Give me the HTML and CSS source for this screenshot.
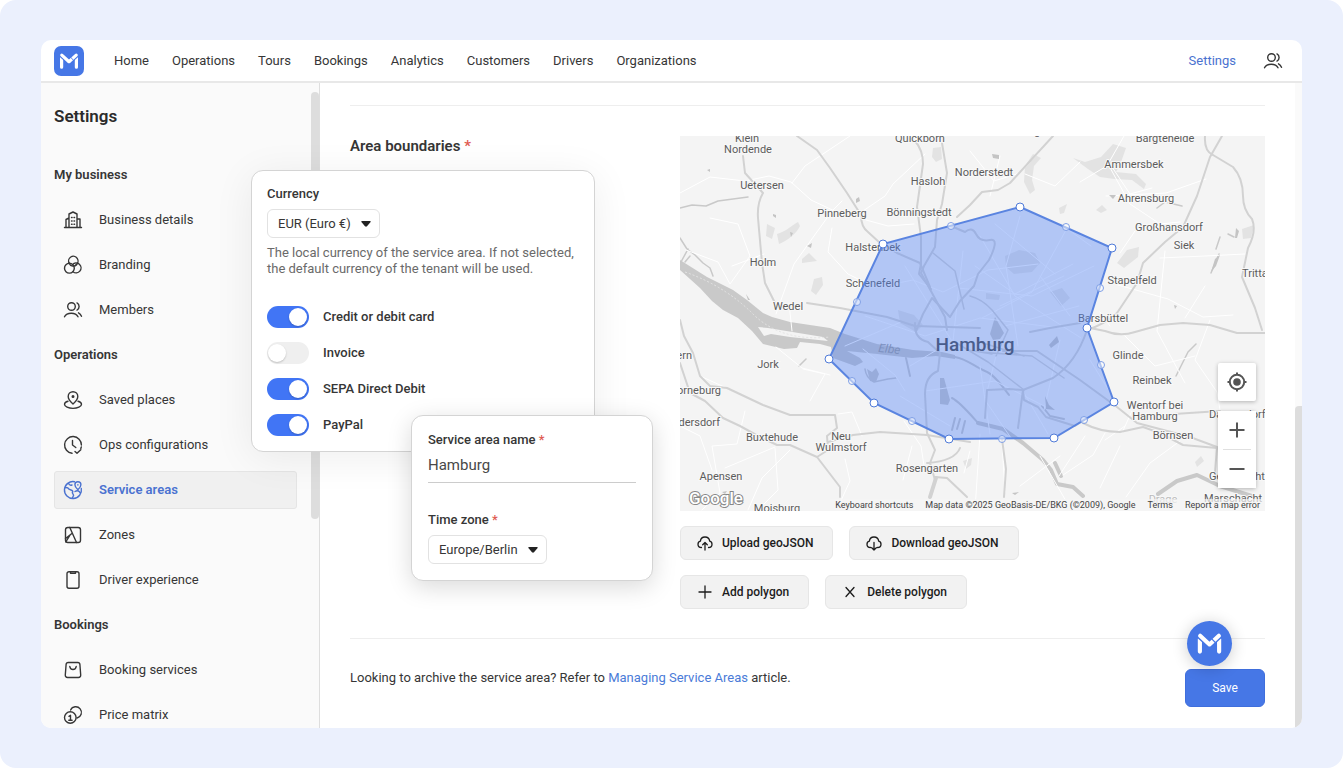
FILE: index.html
```html
<!DOCTYPE html>
<html lang="en">
<head>
<meta charset="utf-8">
<meta name="viewport" content="width=device-width, initial-scale=1">
<title>Settings – Service areas</title>
<link rel="stylesheet" href="styles.css">
</head>
<body>
<svg class="sprite" aria-hidden="true">
  <symbol id="logo" viewBox="0 0 30 30">
    <g fill="none" stroke="#fff" stroke-width="3.2" stroke-linecap="round" stroke-linejoin="round">
      <path d="M7.600 11.500V21.200M22.400 11.500V21.200"/>
      <path stroke="#4677e6" stroke-width="5" d="M7.800 9.300L15 15.900L22.200 9.300"/>
      <path d="M7.800 9.100L15 15.700L22.200 9.100"/>
      <path stroke="#4677e6" stroke-width=".9" stroke-linecap="butt" d="M16.400 11L20 14.800"/>
    </g>
  </symbol>
  <symbol id="people" viewBox="0 0 20 20">
    <circle cx="8.500" cy="6.500" r="3.800"/><path d="M14 2.900c2.800 1.300 2.800 5.900 0 7.200M1.500 16.800c2.300-4.800 11.200-4.800 13.500 0M15.500 12.800c1.400.7 2.300 1.800 3 3.500"/>
  </symbol>
</svg>
<div class="page">
<div class="app">
  <header class="topbar">
    <a class="logo" href="#" aria-label="Start"><svg viewBox="0 0 30 30"><use href="#logo"/></svg></a>
    <nav class="topnav">
      <a href="#">Home</a><a href="#">Operations</a><a href="#">Tours</a><a href="#">Bookings</a><a href="#">Analytics</a><a href="#">Customers</a><a href="#">Drivers</a><a href="#">Organizations</a>
    </nav>
    <a class="topbar-settings" href="#">Settings</a>
    <button class="account" type="button" aria-label="Account"><svg class="icon"><use href="#people"/></svg></button>
  </header>

  <div class="body">
    <aside class="sidebar">
      <h1>Settings</h1>
      <nav class="menu">
        <h2>My business</h2>
        <a href="#"><svg class="icon" viewBox="0 0 20 20"><path d="M1.500 17.500h17M3 17.500V9.500l3-1.500v9.500M6 17.500V4l4-2 4 2v13.500M14 9h3v8.500M8.500 7.500h.6M11 7.500h.6M8.500 11h.6M11 11h.6M8.500 14.300h.6M11 14.300h.6"/></svg>Business details</a>
        <a href="#"><svg class="icon" viewBox="0 0 20 20"><path d="M6.300 8.400A4.700 4.700 0 1 1 13 9.800"/><circle cx="6.400" cy="13.200" r="4.900"/><path d="M6.100 8.200C7.500 11.500 11.500 12.200 13.800 9.500M9.500 9.600A4.900 4.900 0 1 1 10 16.700"/></svg>Branding</a>
        <a href="#"><svg class="icon"><use href="#people"/></svg>Members</a>
        <h2>Operations</h2>
        <a href="#"><svg class="icon" viewBox="0 0 20 20"><path d="M10 14c-3.500-3-4.800-5-4.800-7.500a4.800 4.800 0 0 1 9.600 0C14.800 9 13.500 11 10 14z"/><circle cx="10" cy="6.600" r=".8" fill="currentColor"/><path d="M5 11.200c-2 .5-3.500 1.500-3.500 3 0 2.400 4 4.200 8.500 4.200s8.500-1.800 8.500-4.200c0-1.500-1.500-2.500-3.500-3"/></svg>Saved places</a>
        <a href="#"><svg class="icon" viewBox="0 0 20 20"><path d="M9 18.300A8.400 8.400 0 1 1 18.400 10M18.300 12l-.5 1.500M9.500 5.500V10l3.300 2.500M12 16.500l2 1.800 3.800-3.600"/></svg>Ops configurations</a>
        <a class="active" href="#"><svg class="icon" viewBox="0 0 20 20"><path d="M11.500 1.700A8.500 8.500 0 1 0 18.300 8.500M2 7.500c2.500-.3 3.300.2 4 1.700l3 1.300c1 .5 1 1.300.3 2.200l1.300 2.500-1.300 3M5.500 3.500c1 2 2 2 3.500 1.500M12 11.500c1.500-1 3.500-.8 4.500.3l1 1.700"/><path d="M14.900 9.700c-2-1.700-3-3-3-4.900a3 3 0 0 1 6 0c0 1.900-1 3.200-3 4.900zM14.900 4.800v.3"/></svg>Service areas</a>
        <a href="#"><svg class="icon" viewBox="0 0 20 20"><rect x="2.500" y="2.500" width="15" height="15" rx="2.300"/><path d="M6.800 2.500l6.700 15M2.500 13.500l6.700-5.300M2.800 16.800l4-6.500"/></svg>Zones</a>
        <a href="#"><svg class="icon" viewBox="0 0 20 20"><rect x="4" y="1.700" width="12" height="16.600" rx="2"/><path d="M7.500 1.700v1.600h5V1.700"/></svg>Driver experience</a>
        <h2>Bookings</h2>
        <a href="#"><svg class="icon" viewBox="0 0 20 20"><path d="M5.200 2.500h9.600c1.300 0 2 .8 2.100 2l.8 10.500c.1 1.500-.8 2.500-2.200 2.500h-11c-1.400 0-2.300-1-2.200-2.500L3.100 4.500c.1-1.200.8-2 2.100-2zM6.800 6.500c.5 4 5.900 4 6.400 0"/></svg>Booking services</a>
        <a href="#"><svg class="icon" viewBox="0 0 20 20"><circle cx="7.300" cy="12.500" r="5.800"/><path d="M7.600 5a5.700 5.700 0 1 1 6.500 8M6 11.300l1.500-1v4.900M5.800 15.200h3.300"/></svg>Price matrix</a>
      </nav>
      <span class="sidebar-thumb"></span>
    </aside>

    <main class="content">
      <section class="area">
        <h2>Area boundaries <span class="req">*</span></h2>
        <div class="area-main">
          <div class="map">
            <svg class="map-canvas" viewBox="0 0 585 375" preserveAspectRatio="xMidYMid slice" role="img" aria-label="Map of Hamburg with service area">
              <rect width="585" height="375" fill="#f4f4f4"/>
              <g fill="#e3e3e3">
                <path d="M253 12l8-1 1 12-6 3-4-5zM97 98c8-2 14-8 21-12l2 4c-4 8-12 14-21 18zM122 123l7-6 8 8-15 2zM131 155l3-12 8-2 1 8-7 10zM87 88l8 4-3 11-6-3zM345 30l8-12 8 4-7 8-2 14 3 10-5 4-6-12zM393 22l12 4 16-5 12-13 13 4-6 17-4 7 20 2 10 10-2 5-12-9-18-1-14-2-12-8zM437 127l10-13 12-3-1 10-14 11zM379 72l8-4-3 9-4 1zM416 74l6-5 5 5-6 3zM562 93l12-4-3 13-8 1zM283 325l9-3-1 7-5 4zM515 326l6-6 3 5-7 6z"/>
                <path d="M325 120l14-6 16 3 5 10-8 9-18 2-8-7zM218 174l16 5 9 10-7 7-16-9zM370 156l12-4 8 10-9 8zM306 157l14 2-1 5-13-1z"/>
              </g>
              <g fill="#c9c9c9">
                <path d="M0 124L27 141 53 154 67 164 83 177 92 181 110 186 150 192 165 198 197 208 233 214 262 216 275 219 275 223 256 220 232 222 197 218 167 215 180 222 183 226 175 230 153 222 151 211 140 208 120 206 117 212 104 213 83 208 72 195 58 182 43 174 32 165 20 152 10 143 0 134z"/>
                <path d="M310 198l5-17 4 7 5 9-4 6-7 1z"/>
                <path d="M260 242l4 0 6 22-2 5-8-1z"/>
                <path d="M187 233l5 3 4-4 3 6-3 8-6-1z"/>
              </g>
              <path d="M78 191l10 1 55 9 5 4-38-4-19-3-7 2z" fill="#f4f4f4"/>
              <g class="river">
                <path d="M275 221c12 2 20 10 30 14s18 16 24 24M226 222l4 18M272 262c8 4 18 16 26 25M275 282l-3 12M280 283l-3 10M285 285l-3 12M362 270l8 10 14 3"/>
                <path stroke-width="1.500" d="M185 233q1 9 9 13l14-3 8-1"/>
                <path stroke-width="4" d="M298 287L323 293 343 307 363 324 371 334 377 348 393 351 403 360M375 327l6 13M478 358L497 345 517 339 540 350 575 361"/>
                <path stroke-width="1.500" d="M0 102l7 11 8 6 8 8 7 5 3 8M0 72l12-3 14 1 12-5 30-4M8 113l-7 13M126 223l-7 7M10 120l-5 6M477 72l8-6 17 4M540 101l-4 12M548 98l6 3M539 118l-8 19M496 240l5-10 7-14 8-8"/>
              </g>
              <path d="M5 136Q45 150 73 178T150 201" fill="none" stroke="#e4e4e4" stroke-dasharray="2 2"/>
              <g class="minor">
                <path d="M0 57l30-16 35 4 24-5 22 6 20 18 30 14M112 47L125 30 170 0M30 82l28 6 12 32-20 28-12-22-32-12M52 130L84 118M96 178l18-50 20-28 18-25 10-10M152 92l-4 24 20 22 20 10M183 75l22-15 8-12 32-30M186 84l22 6 26-2M112 195l-3-28M290 15l24 30 26-8 22-24M310 60l10-40M345 38l30 12 25-24M400 46l30-18 20 30 22-6M444 0l-16 28 22 40 30 20 20-2M386 92l25 18M426 60l60-3 40-14M455 95l-15 22M438 149l50 14 35 18 30-2M480 122l45-2 40-2M430 190l-10-14M445 200l30 30 40-10M485 115l-8 80 28 52M525 150l-20 32M530 184l-15 40 22 32 5 30M460 266l34 4M410 224l26 42M425 297l-12 22-30 20M445 290l-20 14M452 275l-10 22M500 305l-30 22-24 34M440 310l-20 42M405 300l-26 40M290 315l-6 22M300 298l-5 76M322 306l3 50M182 300l-10-24-14 2M65 275l-8 33-25 2 8 47-18 17M110 314l-28 28-14 32M95 312l3 42-20 20M165 323l5 22-10 22M225 255l-10-16-32-26M232 310l-9 34M224 285l17 25 4 26M96 211l26 21 28 7M20 240l44 20M130 265l15-27-22-5M0 290l20 10 12 34M45 332l50-21M340 350l40-30M360 320l30 52"/>
                <path d="M203 150l30-6 30 12 45-22 50-6M225 130l50 80M283 115l-10 90M295 130l40 28 58-30M340 80l-14 50 12 80M386 94l-34 62-50 26M414 130l-62 30-74-8M300 100l35 60 66 42M315 88l60 50M185 180l60 20 55-18 80 10M165 210l56-24M220 260l50 30M245 255l70-10 55 28M300 230l10 68M320 204l-15 60 26 38M340 250l28 48M380 204l-16 70M230 230l40-24M360 140l30 40M320 170l64-30M325 190l74-20"/>
              </g>
              <g class="road">
                <path d="M117 0L137 14 150 32 167 57 181 79Q181 91 188 96L200 107 217 117 240 127 250 151"/>
                <path d="M235 5Q243 14 243 28L237 71 241 101V128L239 138 251 153"/>
                <path d="M262 7L267 37 262 68 257 84 255 111 244 130 241 137 252 157 265 181 267 194"/>
                <path d="M63 20L65 37 83 57Q77 67 78 82L82 127 85 147 95 167M127 167L160 172 207 181 235 190 300 192"/>
                <path d="M373 0L330 47 318 54 302 56 290 69 277 81M271 90L285 96Q292 90 296 98T310 104 309 124L298 138 294 150 280 165 270 181 252 162 243 178 236 195"/>
                <path d="M542 0L530 21 517 60 503 91 485 106 463 127 457 147 437 177Q425 188 407 194C400 215 388 232 373 242T343 254"/>
                <path d="M525 0Q524 15 533 19L553 31Q563 42 563 60 563 74 572 83 577 95 568 112L562 141 575 172 582 194"/>
                <path d="M410 192L425 195Q440 201 455 196L480 189 503 187 530 189 557 197H585M350 196L370 192 400 187"/>
                <path d="M323 215L357 215 400 244 437 271 457 287 510 301 537 311 535 336M403 287Q420 296 440 296L463 291 480 297 503 309 537 312 565 319M494 278L540 275"/>
                <path d="M235 187Q234 203 248 206L260 217 258 235Q245 240 245 258L247 297 255 314 250 327 255 344 250 361M255 341L267 342 287 361M247 327Q275 325 280 312"/>
                <path d="M148 306L173 299 200 296 247 299 290 306M322 303l4 30-2 28M343 254L344 264 358 271 366 281 395 290 404 284M343 254l-14-1-22 1-2 28M343 254l-5 38"/>
                <path d="M0 184L4 200 13 217 20 240 30 250 47 252 83 269 110 279 155 279 157 292 147 300 148 314 137 321M0 227L10 257 25 265 43 282 60 290 80 301 97 309H110L137 321 160 351V361"/>
                <path stroke-width="1.500" d="M253 117L275 135 284 173M290 160Q302 163 312 174L328 194 316 220M278 208l30 18 36 28M300 216l52 4 32 22M288 214l24 4M300 206l44 14"/>
                <path stroke-width="4" d="M256 342L250 361"/>
              </g>
              <g fill="#c4c4c4"><path d="M93 78l3 1v3l-3-2zM110 96l3 1-2 4zM127 110l5-3-1 5zM176 63l3-2 1 4-4 2zM27 34l3-1v3zM66 158l4 6h-2zM312 18l7 1v4l-6-1zM429 59l7 0-3 4zM494 169l3 1-2 3zM531 136l4-13 5-4-4 11zM556 92l3 3-2 7h-2zM42 356l5-1-2 3zM365 260l4 9 6 5-9-1zM369 209l8-9 2 6-8 6zM332 357l7-1-4 3zM457 24l3 2z"/></g>
              <g class="label">
                <text x="67" y="6">Klein</text><text x="68" y="17">Nordende</text><text x="82" y="53">Uetersen</text><text x="240" y="6">Quickborn</text><text x="248" y="49">Hasloh</text><text x="304" y="40">Norderstedt</text><text x="357" y="-1">g</text><text x="485" y="6">Bargteheide</text><text x="454" y="32">Ammersbek</text><text x="466" y="66">Ahrensburg</text><text x="489" y="95">Großhansdorf</text><text x="504" y="113">Siek</text><text x="562" y="141" class="start">Trittau</text><text x="452" y="148">Stapelfeld</text><text x="423" y="186">Barsbüttel</text><text x="162" y="81">Pinneberg</text><text x="239" y="80">Bönningstedt</text><text x="193" y="115">Halstenbek</text><text x="193" y="151">Schenefeld</text><text x="83" y="130">Holm</text><text x="108" y="174">Wedel</text><text x="88" y="232">Jork</text><text x="12" y="223" class="end">ern</text><text x="41" y="258" class="end">orneburg</text><text x="40" y="290" class="end">dersdorf</text><text x="92" y="305">Buxtehude</text><text x="161" y="304">Neu</text><text x="161" y="315">Wulmstorf</text><text x="247" y="336">Rosengarten</text><text x="41" y="344">Apensen</text><text x="97" y="376">Moisburg</text><text x="448" y="223">Glinde</text><text x="472" y="248">Reinbek</text><text x="475" y="273">Wentorf bei</text><text x="475" y="284">Hamburg</text><text x="493" y="303">Börnsen</text><text x="529" y="282" class="start">Dassendorf</text><text x="529" y="344" class="start">Geesthacht</text><text x="553" y="366">Marschacht</text><text x="483" y="367" class="faint">Drage</text>
                <text x="209" y="217" class="water" transform="rotate(7 209 217)">Elbe</text>
                <text x="295" y="215" class="city">Hamburg</text>
              </g>
              <path class="zone" d="M340 71L432 112 407 192 434 266 374 302 269 303 194 267 149 223 203 108z"/>
              <g class="mid"><circle cx="271" cy="90" r="3.500"/><circle cx="386" cy="91" r="3.500"/><circle cx="420" cy="152" r="3.500"/><circle cx="421" cy="229" r="3.500"/><circle cx="404" cy="284" r="3.500"/><circle cx="322" cy="303" r="3.500"/><circle cx="232" cy="285" r="3.500"/><circle cx="172" cy="245" r="3.500"/><circle cx="177" cy="166" r="3.500"/></g>
              <g class="vertex"><circle cx="340" cy="71" r="4"/><circle cx="432" cy="112" r="4"/><circle cx="407" cy="192" r="4"/><circle cx="434" cy="266" r="4"/><circle cx="374" cy="302" r="4"/><circle cx="269" cy="303" r="4"/><circle cx="194" cy="267" r="4"/><circle cx="149" cy="223" r="4"/><circle cx="203" cy="108" r="4"/></g>
              <text x="9" y="368" class="google">Google</text>
            </svg>
            <div class="map-controls">
              <button class="locate" type="button" aria-label="My location"><svg viewBox="0 0 20 20"><circle cx="10" cy="10" r="7.200"/><path d="M10 .5v2.500M10 17v2.500M.5 10H3M17 10h2.500"/><circle cx="10" cy="10" r="2.800" fill="#555"/></svg></button>
              <div class="zoom">
                <button type="button" aria-label="Zoom in"><svg viewBox="0 0 20 20"><path d="M10 2.500v15M2.500 10h15"/></svg></button>
                <hr>
                <button type="button" aria-label="Zoom out"><svg viewBox="0 0 20 20"><path d="M2.500 10h15"/></svg></button>
              </div>
            </div>
            <div class="map-legal"><button type="button">Keyboard shortcuts</button><span>Map data ©2025 GeoBasis-DE/BKG (©2009), Google</span><a href="#">Terms</a><a href="#">Report a map error</a></div>
          </div>
          <div class="actions">
            <button class="btn" type="button"><svg viewBox="0 0 16 16"><path d="M4.500 12.500C2.300 12.500 1 11 1 9.200c0-1.500 1-2.600 2.400-3C3.600 3.500 5.500 2 8 2s4.400 1.600 4.700 4.200c1.400.4 2.300 1.500 2.300 3 0 1.700-1.300 3.300-3.500 3.300M8 15V8M5.700 9.800L8 7.500l2.300 2.300"/></svg>Upload geoJSON</button>
            <button class="btn" type="button"><svg viewBox="0 0 16 16"><path d="M4.500 12.500C2.300 12.500 1 11 1 9.200c0-1.500 1-2.600 2.400-3C3.600 3.500 5.500 2 8 2s4.400 1.600 4.700 4.200c1.400.4 2.300 1.500 2.300 3 0 1.700-1.300 3.300-3.500 3.300M8 7.500V15M5.700 12.700L8 15l2.300-2.300"/></svg>Download geoJSON</button>
          </div>
          <div class="actions">
            <button class="btn" type="button"><svg viewBox="0 0 16 16"><path d="M8 2v12M2 8h12"/></svg>Add polygon</button>
            <button class="btn" type="button"><svg viewBox="0 0 16 16"><path d="M4 3.500L12 12.500M12 3.500L4 12.500"/></svg>Delete polygon</button>
          </div>
        </div>
      </section>
      <footer class="archive">
        <p>Looking to archive the service area? Refer to <a href="#">Managing Service Areas</a> article.</p>
        <button class="save" type="button">Save</button>
      </footer>
    </main>
    <div class="scroll-track"><span class="scroll-thumb"></span></div>
  </div>

  <form class="card payment-card">
    <label class="label" for="currency">Currency</label>
    <div class="select"><select id="currency"><option>EUR (Euro €)</option></select><svg viewBox="0 0 10 6"><path d="M1 0h8q1 0 .6 1L6 5.300q-1 .9-2 0L.4 1Q0 0 1 0z"/></svg></div>
    <p class="hint">The local currency of the service area. If not selected, the default currency of the tenant will be used.</p>
    <div class="toggles">
      <label><input type="checkbox" checked>Credit or debit card</label>
      <label><input type="checkbox">Invoice</label>
      <label><input type="checkbox" checked>SEPA Direct Debit</label>
      <label><input type="checkbox" checked>PayPal</label>
    </div>
  </form>

  <form class="card name-card">
    <label class="label" for="area-name">Service area name <span class="req">*</span></label>
    <input class="text-input" id="area-name" type="text" value="Hamburg">
    <label class="label" for="tz">Time zone <span class="req">*</span></label>
    <div class="select"><select id="tz"><option>Europe/Berlin</option></select><svg viewBox="0 0 10 6"><path d="M1 0h8q1 0 .6 1L6 5.300q-1 .9-2 0L.4 1Q0 0 1 0z"/></svg></div>
  </form>

  <button class="fab" type="button" aria-label="Open assistant"><svg viewBox="0 0 30 30"><use href="#logo"/></svg></button>
</div>
</div>
</body>
</html>
```
FILE: styles.css
```css
* { box-sizing: border-box; }
body { margin: 0; background: #fff; color: #363636; font: 13px/18px Roboto, "Noto Sans", sans-serif; }
a { color: inherit; text-decoration: none; }
button, input, select { font: inherit; color: inherit; }
button { cursor: pointer; }
h1, h2, p { margin: 0; }
.sprite { display: none; }

.page { height: 100vh; min-height: 640px; padding: 40px 41px; background: #ebf0fd; border-radius: 16px; }
.app { position: relative; display: flex; flex-direction: column; height: 100%; background: #fff; border-radius: 10px; }
.icon { width: 20px; height: 20px; flex: none; fill: none; stroke: currentColor; stroke-width: 1.4; stroke-linecap: round; stroke-linejoin: round; }

.topbar { display: flex; align-items: center; height: 43px; padding: 0 19px 0 13px; border-bottom: 2px solid #e8e8e8; flex: none; }
.logo { display: block; width: 30px; height: 30px; background: #4677e6; border-radius: 7px; }
.logo svg { display: block; width: 30px; height: 30px; }
.topnav { display: flex; gap: 23px; margin: 0 auto 0 30px; }
.topbar-settings { margin-right: 27px; color: #4a72d0; }
.account { display: flex; padding: 0; border: 0; background: none; }

.body { display: flex; flex: 1; min-height: 0; overflow: hidden; border-radius: 0 0 10px 10px; }
.sidebar { position: relative; flex: none; width: 279px; padding: 20px 22px 0 13px; overflow: hidden; background: #fafafa; border-right: 1px solid #dedede; }
.sidebar h1 { margin-bottom: 27px; font-size: 17px; line-height: 26px; font-weight: 600; color: #2b2b2b; }
.menu { display: flex; flex-direction: column; gap: 7px; }
.menu h2 { font-size: 13px; line-height: 38px; font-weight: 600; }
.menu a { display: flex; align-items: center; gap: 16px; height: 38px; padding: 0 8px; border: 1px solid transparent; border-radius: 3px; }
.menu .active { background: #f0f0f0; border-color: #e5e5e5; color: #4a72d0; font-weight: 600; }
.sidebar-thumb { position: absolute; top: 9px; right: 0; width: 8px; height: 427px; border-radius: 4px; background: #ddd; }

.content { flex: 1; min-width: 0; padding: 22px 30px 0; overflow: hidden; }
.area { display: grid; grid-template-columns: 330px 1fr; padding: 30px 0 29px; border-top: 1px solid #eee; }
.area h2 { font-size: 15px; line-height: 20px; font-weight: 600; }
.req { color: #e05b52; }
.area-main { display: flex; flex-direction: column; gap: 15px; min-width: 0; }
.actions { display: flex; flex-wrap: wrap; gap: 16px; }
.btn { display: flex; align-items: center; gap: 9px; height: 34px; padding: 0 19px 0 16px; border: 1px solid #e6e6e6; border-radius: 6px; background: #f2f2f2; color: #1c1c1c; font-size: 12px; font-weight: 500; }
.btn svg { width: 16px; height: 16px; fill: none; stroke: currentColor; stroke-width: 1.3; stroke-linecap: round; stroke-linejoin: round; }
.archive { display: flex; justify-content: space-between; padding-top: 30px; border-top: 1px solid #eee; }
.archive a { color: #4a7bd8; }
.save { width: 80px; height: 38px; border: 1px solid #3f6edc; border-radius: 6px; background: #4677e6; color: #fff; font-size: 12px; }

.scroll-track { position: relative; flex: none; width: 7px; background: #fafafa; }
.scroll-thumb { position: absolute; right: 0; bottom: 0; width: 7px; height: 50%; background: #ddd; border-radius: 4px 0 0 0; }

.map { position: relative; height: 375px; overflow: hidden; }
.map-canvas { display: block; width: 100%; height: 100%; font-family: Roboto, sans-serif; }
.road, .river, .minor { fill: none; stroke-linejoin: round; stroke-linecap: round; }
.road { stroke: #d2d2d2; stroke-width: 2; }
.river { stroke: #c9c9c9; stroke-width: 2; }
.minor { stroke: #fff; stroke-width: 1; }
.label text { font-size: 11px; fill: #5c5c5c; stroke: #f8f8f8; stroke-width: 2px; paint-order: stroke; text-anchor: middle; }
.label .start { text-anchor: start; }
.label .end { text-anchor: end; }
.label .faint { fill: #bbb; }
.label .water { font-size: 12px; font-style: italic; fill: #999; stroke: none; }
.label .city { font-size: 19px; font-weight: 500; fill: #454545; stroke: none; }
.zone { fill: #4f83f7; fill-opacity: .4; stroke: #5a84e0; stroke-width: 2; }
.vertex circle { fill: #fff; stroke: #4f7ad8; stroke-width: 1; }
.mid circle { fill: #fff; fill-opacity: .5; stroke: #7f9fe6; stroke-width: 1; }
.google { font-size: 17px; font-weight: 500; fill: #fff; stroke: #888; stroke-width: 2px; paint-order: stroke; }
.map-controls { position: absolute; right: 9px; bottom: 23px; display: flex; flex-direction: column; gap: 10px; width: 38px; }
.map-controls button { display: flex; align-items: center; justify-content: center; width: 38px; height: 38px; padding: 0; border: 0; background: #fff; }
.map-controls svg { width: 20px; height: 20px; fill: none; stroke: #555; stroke-width: 2; }
.locate, .zoom { box-shadow: 0 1px 4px #0004; border-radius: 2px; }
.zoom { background: #fff; }
.zoom hr { margin: 0 5px; border: 0; border-top: 1px solid #e0e0e0; }
.map-legal { position: absolute; right: 0; bottom: 0; display: flex; gap: 12px; padding: 0 5px; background: #f5f5f5b0; color: #444; font-size: 9px; line-height: 12px; white-space: nowrap; }
.map-legal button { padding: 0; border: 0; background: none; }

.card { position: absolute; background: #fff; border: 1px solid #d4d4d4; border-radius: 12px; padding: 15px; }
.payment-card { left: 210px; top: 130px; width: 344px; box-shadow: 0 6px 40px #00000012; }
.name-card { left: 370px; top: 375px; width: 242px; padding: 16px; box-shadow: 0 6px 24px #00000026; }
.card .label { display: block; line-height: 16px; font-weight: 500; }
.select { position: relative; width: fit-content; margin-top: 7px; }
.select select { display: block; height: 29px; padding: 0 28px 0 10px; border: 1px solid #e2e2e2; border-radius: 6px; background: #fff; appearance: none; }
.select svg { position: absolute; right: 9px; top: 12px; width: 10px; height: 6px; fill: #222; pointer-events: none; }
.hint { margin: 7px 0 29px; line-height: 16px; color: #6a6a6a; }
.toggles { display: flex; flex-direction: column; gap: 14px; }
.toggles label { display: flex; align-items: center; gap: 14px; height: 22px; font-weight: 500; }
.toggles input { position: relative; width: 42px; height: 22px; margin: 0; border-radius: 11px; background: #efefef; appearance: none; }
.toggles input::before { content: ""; position: absolute; left: 1px; top: 2px; width: 18px; height: 18px; border-radius: 50%; background: #fff; box-shadow: 0 1px 2px #0003; }
.toggles input:checked { background: #4175f5; }
.toggles input:checked::before { left: 22px; }
.text-input { display: block; width: 100%; height: 35px; margin-bottom: 29px; padding: 0; border: 0; border-bottom: 1px solid #ccc; background: none; color: #484848; font-size: 15px; }

.fab { position: absolute; right: 70px; bottom: 62px; width: 45px; height: 45px; padding: 0; border: 0; border-radius: 50%; background: #4677e6; box-shadow: 0 2px 16px #0003; }
.fab svg { display: block; width: 39px; height: 39px; margin: auto; }
```
